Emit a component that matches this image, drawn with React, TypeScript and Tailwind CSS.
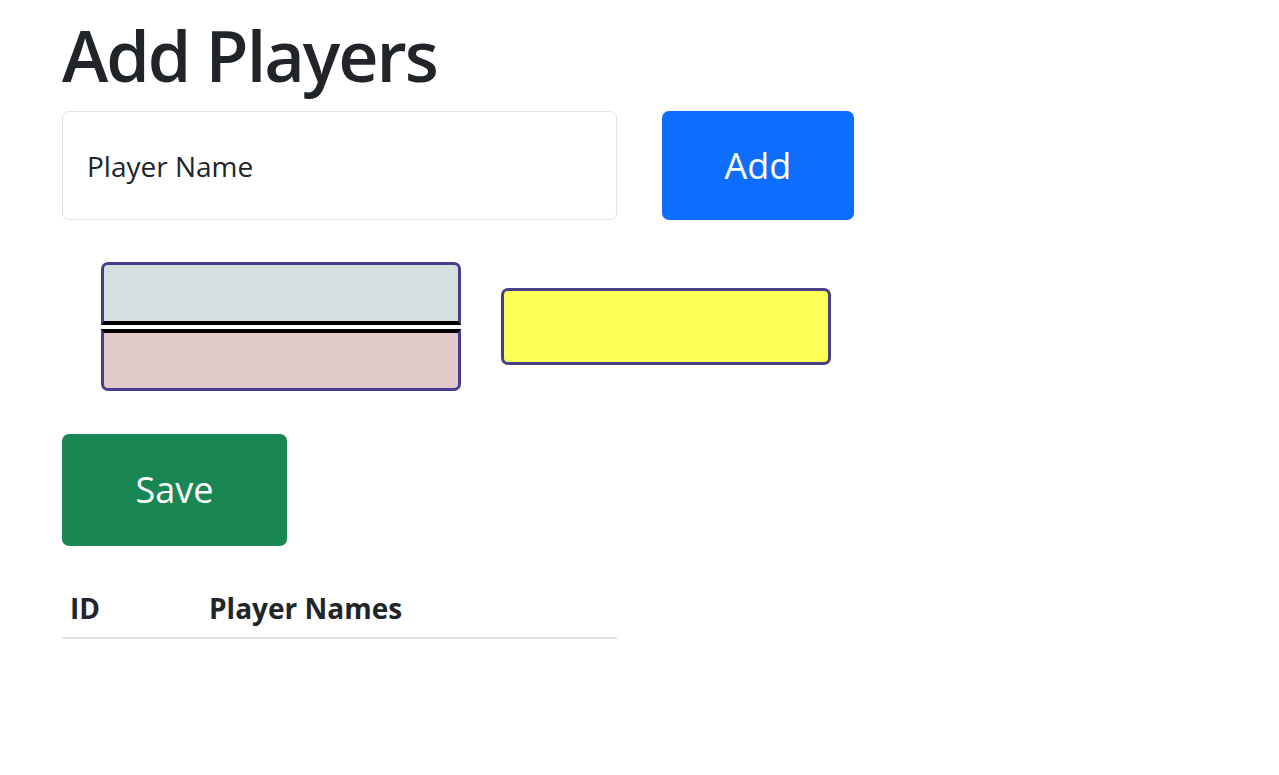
import React from "react";

const font = { fontFamily: '"Open Sans", "Noto Sans", sans-serif' };

const App: React.FC = () => {
  return (
    <div className="min-h-screen bg-white text-[#212529] px-[62px] pt-[12px]" style={font}>
      {/* Title */}
      <h1 className="text-[70px] leading-[86px] font-semibold tracking-[-2px] mb-[13px]">Add Players</h1>

      {/* Input row */}
      <div className="flex items-center gap-[45px]">
        <input
          type="text"
          placeholder="Player Name"
          className="w-[555px] h-[109px] border border-[#dee2e6] rounded-[7px] pl-[24px] text-[28px] placeholder:text-[#212529] outline-none"
        />
        <button className="w-[192px] h-[109px] bg-[#0d6efd] text-white rounded-[7px] text-[36px]">Add</button>
      </div>

      {/* Boxes */}
      <div className="flex items-center gap-[40px] pl-[39px] mt-[42px]">
        <div className="flex flex-col gap-[4px] w-[360px]">
          <div className="h-[63px] bg-[#d4dfe0] border-[3px] border-b-[4px] border-[#483d8b] border-b-black rounded-t-[7px]" />
          <div className="h-[62px] bg-[#e0cbca] border-[3px] border-t-[4px] border-[#483d8b] border-t-black rounded-b-[7px]" />
        </div>
        <div className="w-[330px] h-[77px] bg-[#fcff55] border-[3px] border-[#483d8b] rounded-[7px]" />
      </div>

      {/* Save */}
      <button className="mt-[43px] w-[225px] h-[112px] bg-[#198754] text-white rounded-[7px] text-[36px]">Save</button>

      {/* Table */}
      <table className="mt-[33px] w-[555px] border-collapse text-left">
        <thead>
          <tr className="border-b-2 border-[#dee2e6]">
            <th className="w-[139px] px-[8px] py-[8px] text-[28px] leading-[42px] font-bold">ID</th>
            <th className="px-[8px] py-[8px] text-[28px] leading-[42px] font-bold">Player Names</th>
          </tr>
        </thead>
        <tbody></tbody>
      </table>
    </div>
  );
};

export default App;
